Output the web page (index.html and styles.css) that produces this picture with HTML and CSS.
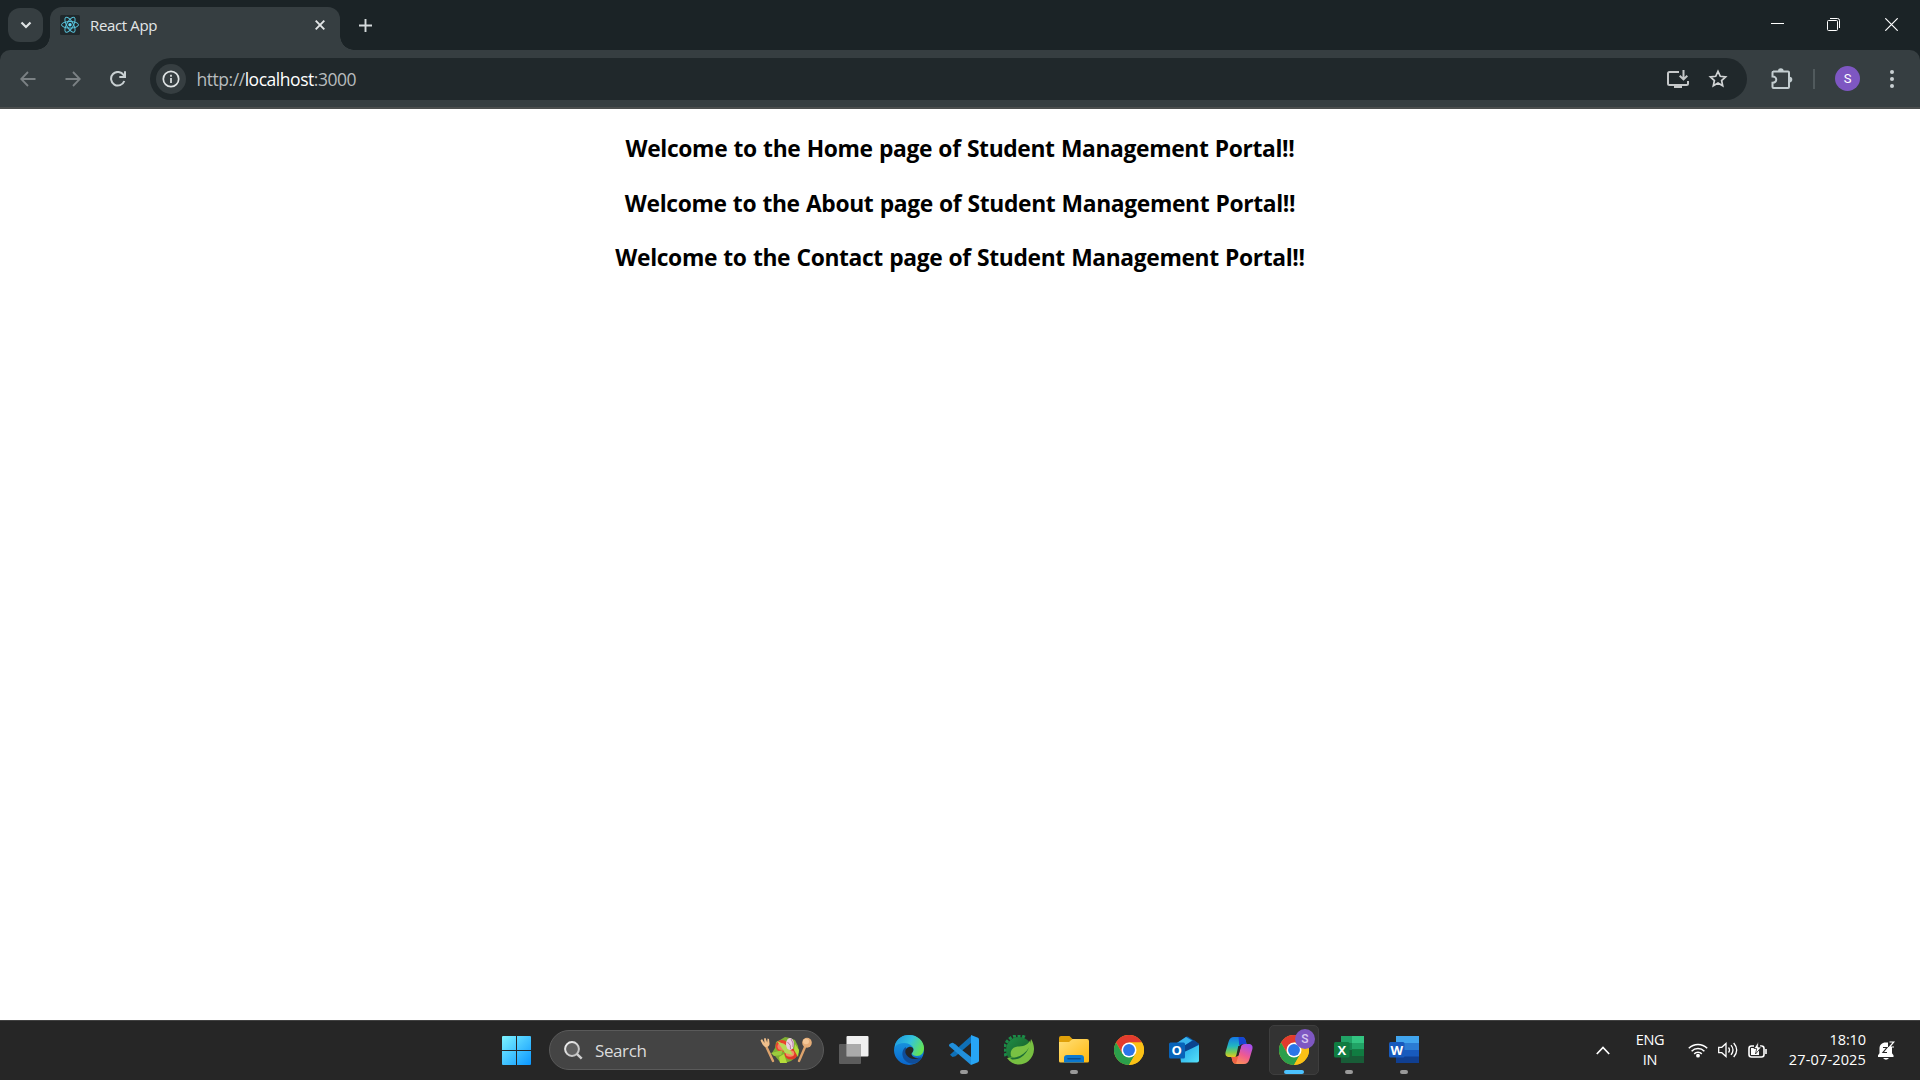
FILE: index.html
```html
<!DOCTYPE html>
<html lang="en">
<head>
<meta charset="utf-8">
<title>React App</title>
<link rel="stylesheet" href="styles.css">
</head>
<body>
<svg class="defs" width="0" height="0" aria-hidden="true">
  <defs>
    <linearGradient id="win" x1="0" y1="0" x2="1" y2="1"><stop offset="0" stop-color="#7df3ff"/><stop offset="1" stop-color="#0a96ff"/></linearGradient>
    <linearGradient id="edgeTop" x1="0" y1="0.2" x2="1" y2="0.6"><stop offset="0" stop-color="#1f9ae0"/><stop offset=".5" stop-color="#33c3dc"/><stop offset="1" stop-color="#66e64e"/></linearGradient>
    <linearGradient id="edgeLeft" x1="0" y1="0" x2="0" y2="1"><stop offset="0" stop-color="#1ba0e2"/><stop offset="1" stop-color="#0a66cc"/></linearGradient>
    <linearGradient id="folder" x1="0" y1="0" x2="1" y2="1"><stop offset="0" stop-color="#ffe07a"/><stop offset="1" stop-color="#ffb80d"/></linearGradient>
    <linearGradient id="copA" x1="0" y1="0" x2="0" y2="1"><stop offset="0" stop-color="#1478e8"/><stop offset=".45" stop-color="#22b6c0"/><stop offset=".75" stop-color="#7ccc50"/><stop offset="1" stop-color="#f2c81c"/></linearGradient>
    <linearGradient id="copB" x1="0.7" y1="0" x2="0.2" y2="1"><stop offset="0" stop-color="#a84fee"/><stop offset=".5" stop-color="#f05a90"/><stop offset="1" stop-color="#ff9a50"/></linearGradient>
    <linearGradient id="spring" x1="0" y1="0" x2="1" y2="1"><stop offset="0" stop-color="#1f9048"/><stop offset=".5" stop-color="#1b7034"/><stop offset="1" stop-color="#1b7034"/></linearGradient>
    <linearGradient id="lens" x1="0" y1="0" x2="1" y2="1"><stop offset="0" stop-color="#f4f4f4"/><stop offset="1" stop-color="#b8b8b8"/></linearGradient>
    <linearGradient id="mail" x1="0" y1="0" x2="1" y2="1"><stop offset="0" stop-color="#1fa3e8"/><stop offset="1" stop-color="#55e0f8"/></linearGradient>
    <symbol id="chrome" viewBox="0 0 48 48">
      <circle cx="24" cy="24" r="24" fill="#fbc116"/>
      <path d="M24 12H44.8A24 24 0 0 0 3.2 12L13.6 30Z" fill="#e33b2e"/>
      <path d="M3.2 12A24 24 0 0 0 24 48L34.4 30 24 24 13.6 30Z" fill="#2b9f4b"/>
      <path d="M44.8 12H24L34.4 30 24 48A24 24 0 0 0 44.8 12Z" fill="#fbc116"/>
      <circle cx="24" cy="24" r="12" fill="#fff"/>
      <circle cx="24" cy="24" r="9.5" fill="#2b75e8"/>
    </symbol>
  </defs>
</svg>

<header class="tabstrip">
  <div class="tab-search">
    <svg width="12" height="8" viewBox="0 0 12 8"><path d="M1.5 1.5 6 6l4.500-4.500" fill="none" stroke="#dfe3e4" stroke-width="2.200"/></svg>
  </div>
  <div class="tab">
    <svg class="favicon" width="20" height="20" viewBox="0 0 20 20">
      <rect width="20" height="20" rx="1.500" fill="#20282b"/>
      <g fill="none" stroke="#58c4dc" stroke-width="1">
        <ellipse cx="10" cy="9.800" rx="8.500" ry="3.300"/>
        <ellipse cx="10" cy="9.800" rx="8.500" ry="3.300" transform="rotate(60 10 9.800)"/>
        <ellipse cx="10" cy="9.800" rx="8.500" ry="3.300" transform="rotate(120 10 9.800)"/>
      </g>
      <circle cx="10" cy="9.800" r="1.700" fill="#61dafb"/>
    </svg>
    <span class="tab-title">React App</span>
    <svg class="tab-close" width="10" height="10" viewBox="0 0 10 10"><path d="M.7.7l8.600 8.600M9.300.7.7 9.300" stroke="#e3e6e7" stroke-width="1.900"/></svg>
  </div>
  <svg class="new-tab" width="13" height="13" viewBox="0 0 13 13"><path d="M6.500 0v13M0 6.500h13" stroke="#d5dadb" stroke-width="1.900"/></svg>
  <div class="window-controls">
    <svg width="13" height="13" viewBox="0 0 13 13"><path d="M0 5.500h13" stroke="#fff"/></svg>
    <svg width="13" height="13" viewBox="0 0 13 13"><path d="M3 .5h7.500a2 2 0 0 1 2 2V10" fill="none" stroke="#fff"/><rect x=".5" y="2.500" width="10" height="10" rx="1" fill="none" stroke="#fff"/></svg>
    <svg class="close" width="13" height="13" viewBox="0 0 13 13"><path d="M.3.3l12.400 12.400M12.700.3.3 12.700" stroke="#fff" stroke-width="1.200"/></svg>
  </div>
</header>

<nav class="toolbar">
  <svg class="nav-icon dim" width="16" height="16" viewBox="0 0 16 16"><path d="M15.500 8H1.500M8 1 1.200 8 8 15"/></svg>
  <svg class="nav-icon dim" width="16" height="16" viewBox="0 0 16 16"><path d="M.5 8h14M8 1l6.800 7L8 15"/></svg>
  <svg class="nav-icon reload" width="16" height="16" viewBox="0 0 16 16"><path d="M14.300 10a6.800 6.800 0 1 1-.8-6.100l1.200 1.500"/><path d="M15 .3V6H9.300"/></svg>
  <div class="omnibox">
    <span class="site-info">
      <svg width="18" height="18" viewBox="0 0 18 18"><circle cx="9" cy="9" r="7.700" fill="none" stroke="#dfe3e4" stroke-width="1.700"/><path d="M9 8v5M9 4.800v1.900" stroke="#dfe3e4" stroke-width="1.700"/></svg>
    </span>
    <span class="url"><span class="url-dim">http://</span>localhost<span class="url-dim">:3000</span></span>
    <svg class="install" width="22" height="19" viewBox="0 0 22 19"><g fill="none" stroke="#c5c8c9" stroke-width="2"><path d="M12 2H2.500Q1 2 1 3.500v10Q1 15 2.500 15h17q1.500 0 1.500-1.500V11"/><path d="M16.500 0v9M12.700 5.700l3.800 3.700 3.800-3.700"/></g><path d="M7 15h8v3H7z" fill="#c5c8c9"/></svg>
    <svg class="star" width="20" height="20" viewBox="0 0 20 20"><path d="M10 2.300l2.300 5 5.300.6-4 3.600 1.100 5.300L10 14.100l-4.700 2.700 1.100-5.300-4-3.600 5.300-.6z" fill="none" stroke="#d0d3d4" stroke-width="1.700"/></svg>
  </div>
  <svg class="extensions" width="22" height="22" viewBox="0 0 22 22"><path d="M2 3.500h15q1 0 1 1V19q0 1-1 1H2.500q-1 0-1-1v-4.300c5 0 5-6.300 0-6.300V4.500q0-1 1-1z" fill="none" stroke="#c3cdd0" stroke-width="2"/><path d="M7 3a2.800 2.800 0 0 1 5.600 0zM18.500 8.800a2.800 2.800 0 0 1 0 5.600z" fill="#c3cdd0"/></svg>
  <span class="divider"></span>
  <span class="avatar">S</span>
  <svg class="menu" width="4" height="18" viewBox="0 0 4 18"><g fill="#c9d0d2"><circle cx="2" cy="2" r="2"/><circle cx="2" cy="9" r="2"/><circle cx="2" cy="16" r="2"/></g></svg>
</nav>

<main class="page">
  <h3 class="heading">Welcome to the Home page of Student Management Portal!!</h3>
  <h3 class="heading">Welcome to the About page of Student Management Portal!!</h3>
  <h3 class="heading">Welcome to the Contact page of Student Management Portal!!</h3>
</main>

<footer class="taskbar">
  <div class="slot">
    <svg width="29" height="29" viewBox="0 0 29 29"><path d="M1 0h13v14H0V1q0-1 1-1zM15 0h13q1 0 1 1v13H15zM0 15h14v14H1q-1 0-1-1zM15 15h14v13q0 1-1 1H15z" fill="url(#win)"/></svg>
  </div>
  <div class="search">
    <svg width="19" height="19" viewBox="0 0 19 19"><circle cx="8" cy="8" r="6.900" fill="#606060" stroke="url(#lens)" stroke-width="2"/><path d="M12.800 12.800 17.700 17.700" stroke="#d0d0d0" stroke-width="2.400"/></svg>
    <span class="search-label">Search</span>
    <svg width="52" height="27" viewBox="0 0 52 27">
      <g stroke="#dda36c" stroke-width="2.400" stroke-linecap="round"><path d="M6 9l7 15"/><path d="M45.500 9 39 24"/></g>
      <path d="M.5 3.500 2 2l2.500 4L4 1.500l1.500-.5 1.700 4.500.3-4L9 2l.6 5c-.5 4-5 4-7 .5z" fill="#efbf8b"/>
      <ellipse cx="47" cy="5.800" rx="4.800" ry="5" fill="#e5ad78"/><ellipse cx="46" cy="4.500" rx="3" ry="2.800" fill="#f4c797"/>
      <path d="M12 16l3-5 1-6 4-2 5-3 5 1 5 2 3 6 1 6-3 5-5 4-6 2-5-1-5-6z" fill="#7fae32"/>
      <ellipse cx="22" cy="9" rx="6.500" ry="6" fill="#e9432c"/><ellipse cx="21.500" cy="9.500" rx="4" ry="3.500" fill="#f38164"/>
      <ellipse cx="31" cy="17" rx="6.500" ry="5.500" fill="#df3928"/><ellipse cx="30" cy="16.500" rx="4.300" ry="3.300" fill="#f58b65"/>
      <path d="M17 4 25 16l8 2-5-9z" fill="#b7da57"/><path d="M11 16 23 13l-2 5-7 1z" fill="#9bcb3d"/>
      <ellipse cx="30" cy="7" rx="4" ry="6" fill="#ead0df"/><path d="M27.500 5q4 3 3 7M31 2q3 4 2 8" stroke="#b878a3" fill="none"/>
      <path d="M35 7l4 6-1 7-4-7zM19 20l5-3 3 9-7 0z" fill="#b5dc3a"/>
    </svg>
  </div>
  <div class="slot">
    <svg width="30" height="30" viewBox="0 0 30 30"><rect x="7.500" y="1" width="22" height="20.500" rx="1" fill="#f0f0f0"/><rect x="0" y="9" width="22" height="20" rx="1" fill="#666" fill-opacity=".85"/><path d="M7.500 9H22v12.500H7.500z" fill="#aaa"/></svg>
  </div>
  <div class="slot">
    <svg width="30" height="30" viewBox="0 0 30 30">
      <circle cx="15" cy="15" r="15" fill="url(#edgeLeft)"/>
      <path d="M1 10C3 3 9 0 15 0c9 0 15 6.500 15 13 0 5-3 8-7 8-3 0-5-1-5-2.500 0-1 1.500-1.500 1.500-4C19.500 11 15 8 10.500 8 6 8 3 9 1 12z" fill="url(#edgeTop)"/>
      <path d="M12 12c-5 3-5 11 1 15 5 3 10 2 14-3 1-1 .5-2-.5-1.400C19 26 12 20 12 15z" fill="#104d98"/>
      <path d="M28.500 21.500c-4 2.500-10 1.500-11-2-.4-1.500 1.900-2 1.900-5 0-2-2.400-3-4.400-2.500-4 1-4.500 5-2.500 8 3.500 5 9.500 5 14.500 2 1-.5 1.800-.4 1.500-.5z" fill="#262626"/>
    </svg>
  </div>
  <div class="slot running">
    <svg width="30" height="30" viewBox="0 0 30 30"><path d="M1 9.500 3.500 7.800l3 1.500L22 24v5z" fill="#1581cc"/><path d="M1 19.800 3.500 22l3-.8L22 8V1z" fill="#0f70b7"/><path d="M0 10.500Q0 9.500 1 8.800l2.500-1L22 22v8L.6 11.500z" fill="#218fdb"/><path d="M22 0l7 2.800q1 .5 1 1.700v21q0 1.200-1 1.700L22 30z" fill="#27a5f5"/></svg>
  </div>
  <div class="slot">
    <svg width="30" height="30" viewBox="0 0 30 30">
      <circle cx="15" cy="15" r="13" fill="url(#spring)"/>
      <path d="M2 21A14 14 0 0 1 22 2.800" fill="none" stroke="#1b8c48" stroke-width="3" stroke-dasharray="3 1.600"/>
      <path d="M27 4c5 8 3.500 17-2.500 22-6 5-16 5-21.500-3l3.500-.5C16 23 25 19 27 4z" fill="#77bf41"/>
      <path d="M7 21.500c-1.500-6 2-10 8-10 6-.4 9-2 11-6 3 12-6 20.500-19 16z" fill="#79c143"/>
      <path d="M6 23.200c8-.3 15-3.700 19-10.700-3.500 8-9.500 12.500-17 12z" fill="#1d6e35"/>
    </svg>
  </div>
  <div class="slot running">
    <svg width="30" height="28" viewBox="0 0 30 28"><path d="M0 2Q0 0 2 0h8.500L14 3.500 10 8H0z" fill="#dfa009"/><path d="M0 6h10l3.500-3H28q2 0 2 2v20q0 1.500-1.500 1.500h-27Q0 26.500 0 25z" fill="url(#folder)"/><path d="M5 26.500V22q0-3 3-3h14q3 0 3 3v4.500z" fill="#0b79d0"/><path d="M9 22.700h12" stroke="#084f91" stroke-width="1.600" stroke-linecap="round"/></svg>
  </div>
  <div class="slot"><svg width="30" height="30"><use href="#chrome"/></svg></div>
  <div class="slot">
    <svg width="30" height="28" viewBox="0 0 30 28"><path d="M5 9 17 .8Q18 .3 19 .8L30 8v9L14 22 5 17z" fill="#0d61b7"/><path d="M5 9 17 1l6 3.500L8 15z" fill="#38b5ed"/><path d="M13 11 25 4l5 4-14 10z" fill="#0b438e"/><path d="M30 9v15.500q0 2-2 2H12L11 18z" fill="url(#mail)"/><rect y="6.500" width="16" height="16" rx="1.500" fill="#0863b9"/><text class="app-letter" x="7.600" y="19">O</text></svg>
  </div>
  <div class="slot">
    <svg width="28" height="27" viewBox="0 0 28 27">
      <path d="M16 0c3 0 4 1 4.700 3.500L21.500 7H18c-3 0-3.500 1.500-4.200 4L12 17.500C11 20.500 9 21 6 20H5C1 20 0 18 .6 15L3.500 5C4.500 1.500 6 0 9 0z" fill="url(#copA)"/>
      <path d="M13.500 0H16c3 0 4 1 4.700 3.500L21.500 7H18c-2 0-3 .8-3.700 2z" fill="#1644d4"/>
      <path d="M12 27c-3 0-4-1-4.700-3.500L6.500 20H10c3 0 3.500-1.500 4.200-4L16 9.500C17 7 19 7 22 7h1c4 0 5 2 4.400 5l-2.900 10C23.500 25.500 22 27 19 27z" fill="url(#copB)"/>
      <path d="M6.500 20H10c2 0 3-1 3.600-2L11 26.800c-2-.3-3.200-1.300-3.700-3.300z" fill="#ef6343"/>
      <path d="M13.300 9h2.800l-2.900 10h-2z" fill="#262626"/>
    </svg>
  </div>
  <div class="slot active">
    <svg width="30" height="30"><use href="#chrome"/></svg>
    <span class="badge">S</span>
  </div>
  <div class="slot running">
    <svg width="30" height="28" viewBox="0 0 30 28"><path d="M7 0h23v27H7z" fill="#185c37"/><path d="M7 0h12v13H7z" fill="#21a366"/><path d="M18 0h12v7H18z" fill="#33c481"/><path d="M18 7h12v6.500H18z" fill="#21a366"/><path d="M7 7h11v7H7z" fill="#168250"/><path d="M18 13.500h12V20H18z" fill="#107c41"/><rect y="6" width="15.500" height="15.500" rx="1.500" fill="#107c41"/><text class="app-letter" x="7.800" y="18.500">X</text></svg>
  </div>
  <div class="slot running">
    <svg width="30" height="28" viewBox="0 0 30 28"><path d="M7 0h23v27H7z" fill="#103f91"/><path d="M7 0h23v7H7z" fill="#41a5ee"/><path d="M7 7h23v7H7z" fill="#2b7cd3"/><path d="M7 14h23v6.500H7z" fill="#185abd"/><rect y="6" width="15.500" height="15.500" rx="1.500" fill="#185abd"/><text class="app-letter" x="7.800" y="18.500">W</text></svg>
  </div>
  <div class="tray">
    <svg class="tray-up" width="14" height="9" viewBox="0 0 14 9"><path d="M.8 8 7 1.500 13.200 8" fill="none" stroke="#fff" stroke-width="1.700"/></svg>
    <div class="lang"><span>ENG</span><span>IN</span></div>
    <svg class="wifi" width="20" height="16" viewBox="0 0 20 16"><g fill="none" stroke="#fff" stroke-width="1.500"><path d="M.8 6.300a13 13 0 0 1 18.400 0"/><path d="M3.600 9.200a9 9 0 0 1 12.800 0"/><path d="M6.200 11.900a5.400 5.400 0 0 1 7.600 0"/></g><circle cx="10" cy="13.700" r="1.900" fill="#fff"/></svg>
    <svg class="volume" width="20" height="16" viewBox="0 0 20 16"><g fill="none" stroke="#fff" stroke-width="1.300"><path d="M.7 5.300h3.100L8 1.500v13l-4.200-3.800H.7z"/><path d="M10.500 5.500q2 2.500 0 5M13 3.200q4 4.800 0 9.600M15.700 1q6 7 0 14"/></g></svg>
    <svg class="battery" width="19" height="17" viewBox="0 0 19 17"><path d="M6 4H3.500Q1 4 1 6.500v6Q1 15 3.500 15h10q2.500 0 2.500-2.500v-6Q16 4 13.500 4H12M18 7v5" fill="none" stroke="#fff" stroke-width="1.600"/><path d="M3 6h8v7H3z" fill="#fff"/><path d="M10.500-.5 6 6.500h2.700L7.500 12l6-7h-3.300z" fill="#fff" stroke="#262626" stroke-width=".8"/></svg>
    <div class="clock"><span class="time">18:10</span><span class="date">27-07-2025</span></div>
    <svg class="bell" width="18" height="19" viewBox="0 0 18 19"><path d="M1 16v-1.800l1.500-2V7.500C2.500 4 5 1.500 8.500 1.500H11V6h4v6.200l1.500 2V16zM6 17h6q-3 3.500-6 0z" fill="#fff"/><path d="M6 6.500h4l-4 5h4" fill="none" stroke="#262626" stroke-width="1.200"/><path d="M12.500 1h4.300l-4.300 5H17" fill="none" stroke="#fff" stroke-width="1.200"/></svg>
  </div>
</footer>
</body>
</html>
```
FILE: styles.css
```css
* { box-sizing: border-box; }
body {
  margin: 0;
  width: 1920px;
  height: 1080px;
  overflow: hidden;
  display: flex;
  flex-direction: column;
  background: #1b2326;
  font-family: "Open Sans", "Noto Sans", sans-serif;
}
svg { display: block; flex: none; }
.defs { position: absolute; }

.tabstrip { height: 50px; display: flex; flex: none; }
.tab-search {
  width: 35px;
  height: 34px;
  margin: 8px 7px 0 8px;
  border-radius: 12px;
  background: #363e41;
  display: flex;
  align-items: center;
  justify-content: center;
}
.tab {
  position: relative;
  width: 290px;
  height: 43px;
  margin-top: 7px;
  padding: 0 15px 0 10px;
  display: flex;
  align-items: center;
  background: #363e41;
  border-radius: 12px 12px 0 0;
}
.tab::before, .tab::after {
  content: "";
  position: absolute;
  bottom: 0;
  width: 14px;
  height: 14px;
}
.tab::before { left: -14px; background: radial-gradient(circle at 0 0, transparent 13.500px, #363e41 14px); }
.tab::after { right: -14px; background: radial-gradient(circle at 100% 0, transparent 13.500px, #363e41 14px); }
.favicon { margin-top: -7px; }
.tab-title {
  margin: -8px auto 0 10px;
  color: #e3e6e7;
  font-size: 15px;
  letter-spacing: -0.350px;
  line-height: 20px;
}
.tab-close { margin-top: -7px; }
.new-tab { margin: 19px auto 0 19px; }
.window-controls { display: flex; gap: 43px; padding: 18px 22px 0 0; }
.window-controls .close { margin-left: 2px; }

.toolbar {
  height: 59px;
  flex: none;
  display: flex;
  align-items: center;
  padding: 0 26px 0 20px;
  background: #363e41;
  border-bottom: 2px solid #4b4e4e;
  border-radius: 10px 10px 0 0;
}
.nav-icon { margin-right: 29px; fill: none; stroke: #c9d0d2; stroke-width: 2; }
.nav-icon.dim { stroke: #7b8184; stroke-width: 1.800; }
.nav-icon.reload { margin-right: 24px; }
.omnibox {
  width: 1597px;
  height: 42px;
  margin: 1px 24px 0 0;
  padding: 0 19px 0 6px;
  border-radius: 21px;
  background: #20282b;
  display: flex;
  align-items: center;
}
.site-info {
  width: 30px;
  height: 30px;
  border-radius: 50%;
  background: #363e41;
  display: flex;
  align-items: center;
  justify-content: center;
}
.url {
  margin: 0 auto 0 10.500px;
  color: #fff;
  font-size: 17.500px;
  letter-spacing: -0.460px;
  line-height: 24px;
}
.url-dim { color: #b7bcbe; }
.install { margin-right: 19px; }
.divider { width: 2px; height: 20px; margin: 0 20px; background: #515a5d; }
.avatar {
  width: 25px;
  height: 25px;
  border-radius: 50%;
  background: #7e57c2;
  color: #fff;
  font: 13px/25px Roboto, sans-serif;
  text-align: center;
}
.menu { margin-left: auto; }

.page { flex: 1; background: #fff; padding-top: 24px; }
.heading {
  margin: 0 0 22.500px;
  text-align: center;
  color: #000;
  font-size: 22.800px;
  font-weight: 700;
  letter-spacing: -0.350px;
  word-spacing: 0.700px;
  line-height: 32px;
  white-space: nowrap;
}

.taskbar {
  height: 60px;
  flex: none;
  display: flex;
  align-items: center;
  padding: 0 0 1px 489px;
  background: #262626;
  border-top: 1px solid #414141;
}
.slot {
  position: relative;
  width: 55px;
  height: 58px;
  display: flex;
  align-items: center;
  justify-content: center;
}
.slot.running::after, .slot.active::after {
  content: "";
  position: absolute;
  bottom: 5px;
  left: 24px;
  width: 8px;
  height: 4px;
  border-radius: 2px;
  background: #9a9a9a;
}
.slot.active::after { left: 18px; width: 20px; background: #4cc2ff; }
.slot.active::before {
  content: "";
  position: absolute;
  inset: 4px 2px 4px 3px;
  border: 1px solid #3e3e3e;
  border-radius: 5px;
  background: #333;
}
.slot svg { position: relative; }
.badge {
  position: absolute;
  left: 29px;
  top: 8px;
  width: 20px;
  height: 20px;
  border-radius: 50%;
  background: #7e57c2;
  color: #d8c8f0;
  font: 500 12px/20px Roboto, sans-serif;
  text-align: center;
}
.app-letter { font: 700 13px "Open Sans", sans-serif; fill: #fff; text-anchor: middle; }
.search {
  width: 275px;
  height: 40px;
  margin: 0 2px 0 5px;
  padding: 0 11px 0 14px;
  display: flex;
  align-items: center;
  border: 1px solid #5a5a5a;
  border-radius: 20px;
  background: #444;
}
.search-label { margin: 0 auto 0 12px; color: #dcdcdc; font-size: 17px; letter-spacing: -0.400px; }

.tray {
  flex: 1;
  display: flex;
  align-items: center;
  justify-content: flex-end;
  padding-right: 25px;
  color: #fff;
  font-size: 14.500px;
  line-height: 20px;
}
.lang { width: 40px; margin: 0 18px 0 20px; text-align: center; display: flex; flex-direction: column; letter-spacing: -0.300px; }
.volume { margin: 0 10px; }
.clock { width: 90px; margin: -1px 11px 0 9px; display: flex; flex-direction: column; text-align: right; white-space: nowrap; letter-spacing: -0.100px; }
.date { letter-spacing: 0.150px; }
```
